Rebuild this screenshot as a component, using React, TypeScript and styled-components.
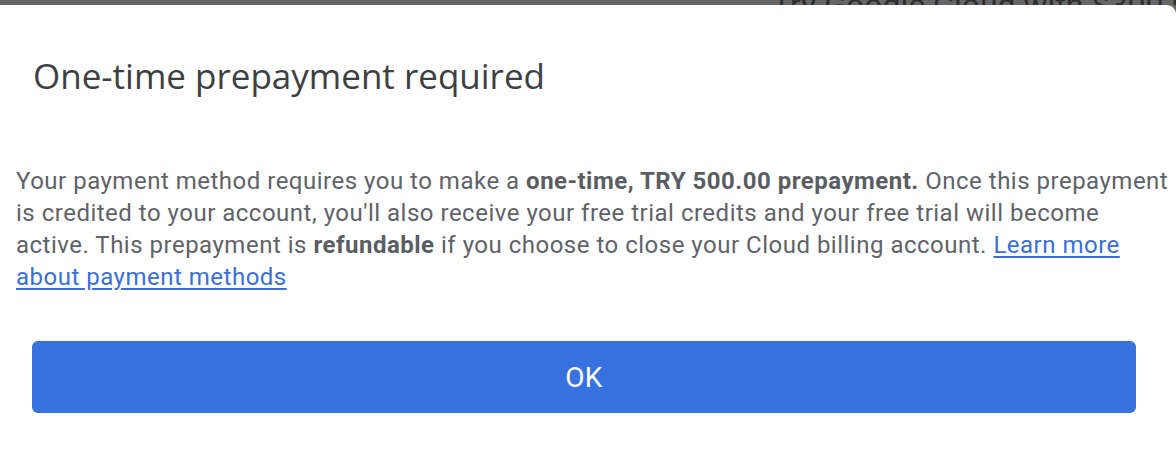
import React, { FC } from "react";
import styled, { createGlobalStyle } from "styled-components";

const GlobalStyle = createGlobalStyle`
    html, body {
        margin: 0;
        padding: 0;
        background: #666666;
    }
    body {
        font-family: Roboto, "Liberation Sans", Arial, sans-serif;
        overflow: hidden;
    }
`;

const App: FC = () => {
    return (
        <Page>
            <GlobalStyle />
            <Backdrop>
                <BackdropText>Try Google Cloud with $300 in free credits</BackdropText>
            </Backdrop>
            <Dialog>
                <Title>One-time prepayment required</Title>
                <Body>
                    Your payment method requires you to make a <strong>one-time, TRY 500.00 prepayment.</strong>{" "}
                    Once this prepayment is credited to your account, you'll also receive your free trial credits
                    and your free trial will become active. This prepayment is <strong>refundable</strong> if you
                    choose to close your Cloud billing account.{" "}
                    <Link href="#">Learn more about payment methods</Link>
                </Body>
                <Actions>
                    <PrimaryButton type="button">OK</PrimaryButton>
                </Actions>
            </Dialog>
        </Page>
    );
};

export default App;

const Page = styled.div`
    display: flex;
    flex-direction: column;
    width: 1176px;
    height: 456px;
    overflow: hidden;
`;

const Backdrop = styled.div`
    height: 5px;
    overflow: hidden;
    padding-left: 772px;
    background: #666666;
    flex-shrink: 0;
`;

const BackdropText = styled.div`
    font-size: 32px;
    line-height: 14px;
    color: #2e2e2e;
    white-space: nowrap;
    margin-top: -2px;
`;

const Dialog = styled.div`
    flex: 1;
    background: #ffffff;
    border-top-right-radius: 9px;
    padding: 49px 0 0 0;
`;

const Title = styled.h2`
    margin: 0 0 0 33px;
    font-family: "Open Sans", Roboto, "Liberation Sans", Arial, sans-serif;
    font-weight: 400;
    font-size: 35px;
    line-height: 44px;
    color: #3c4043;
`;

const Body = styled.p`
    margin: 67px 0 0 16px;
    width: 1158px;
    font-size: 24px;
    line-height: 32px;
    letter-spacing: 0.5px;
    color: #5f6368;

    strong {
        font-weight: 700;
        color: #5a5d61;
    }
`;

const Link = styled.a`
    color: #3a6fd8;
    text-decoration: underline;
    text-underline-offset: 3px;
`;

const Actions = styled.div`
    display: flex;
    padding: 0 40px 0 32px;
    margin-top: 48px;
`;

const PrimaryButton = styled.button`
    flex: 1;
    height: 72px;
    border: none;
    border-radius: 6px;
    background: #3872df;
    color: #ffffff;
    font-family: Roboto, "Liberation Sans", Arial, sans-serif;
    font-size: 28px;
    font-weight: 400;
    letter-spacing: 0.3px;
    cursor: pointer;
`;
